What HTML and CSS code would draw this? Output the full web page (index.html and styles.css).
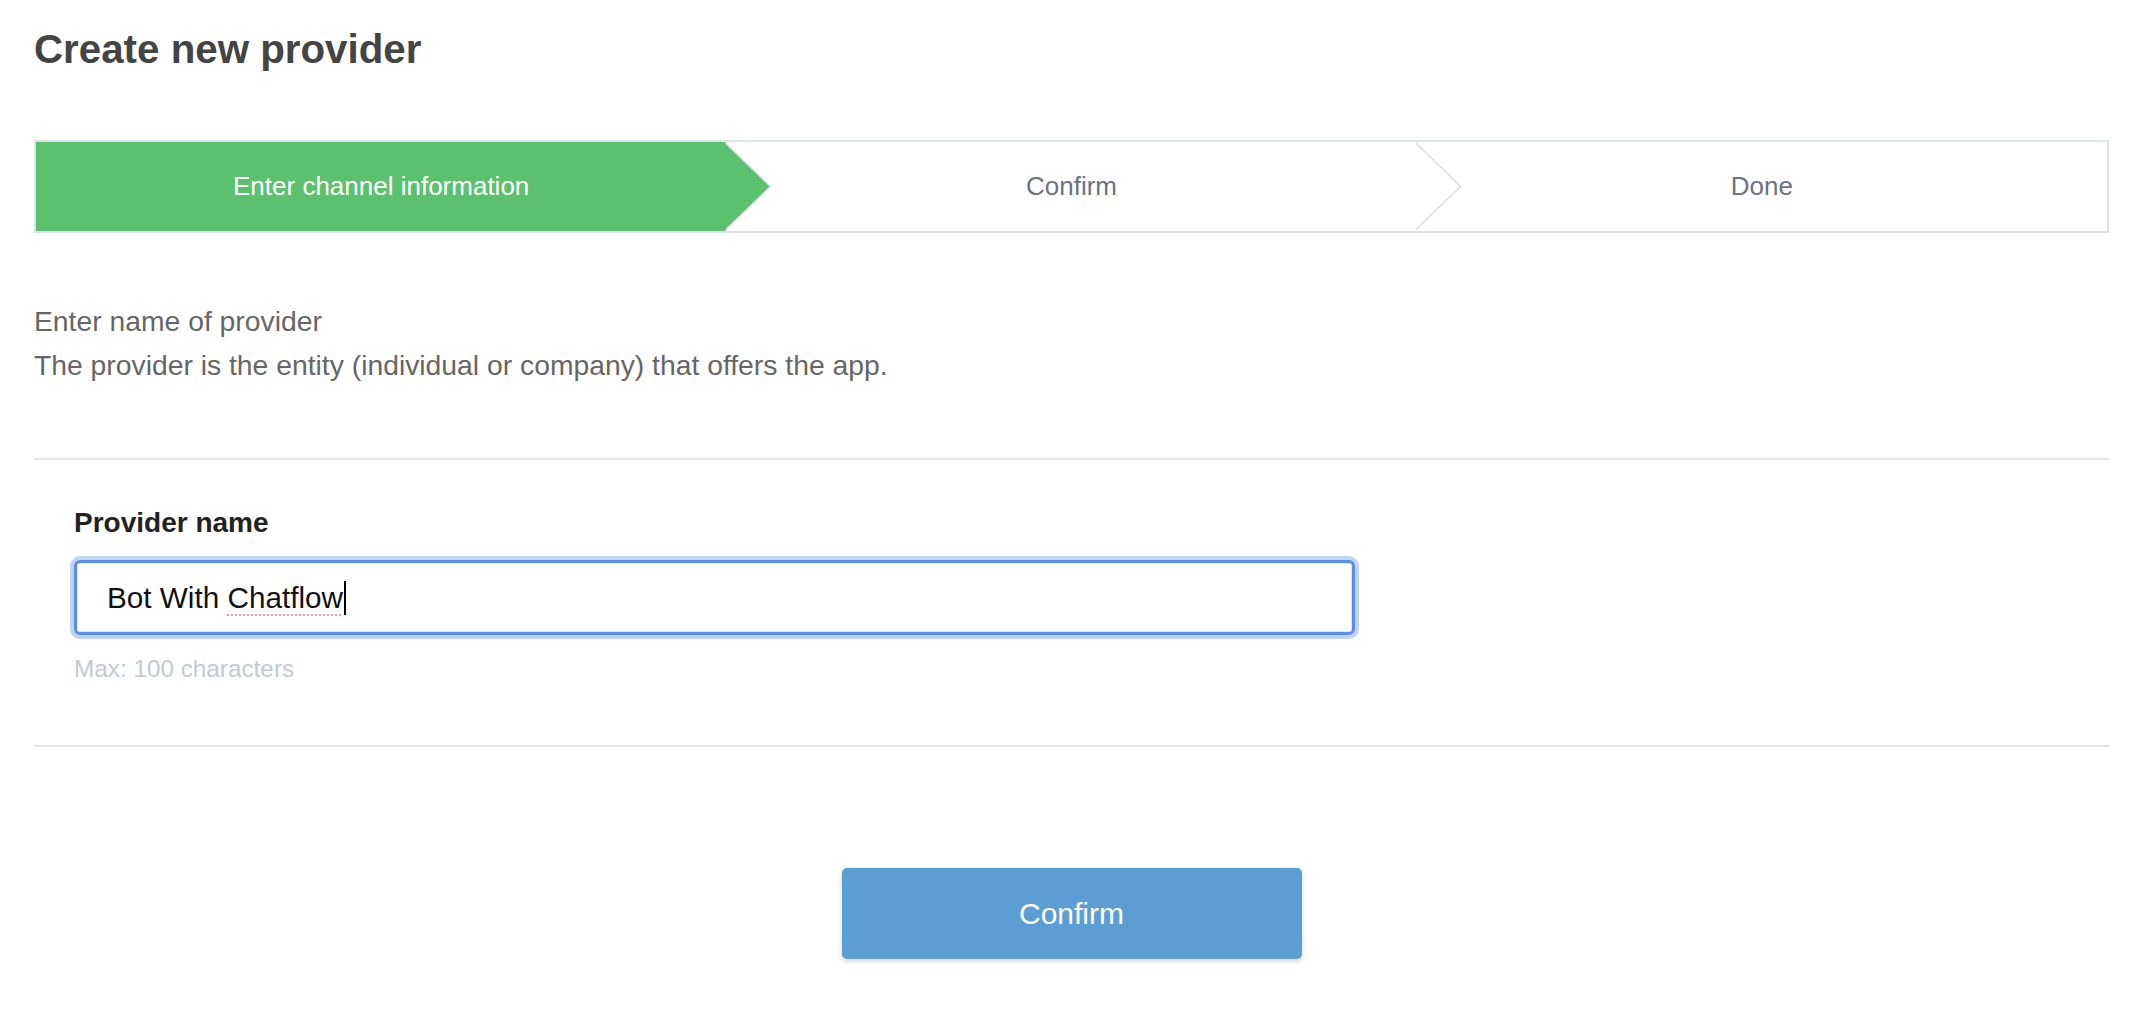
FILE: index.html
```html
<!DOCTYPE html>
<html lang="en">
<head>
<meta charset="utf-8">
<title>Create new provider</title>
<link rel="stylesheet" href="styles.css">
</head>
<body>
<main class="page">
  <h1 class="title">Create new provider</h1>

  <ol class="steps">
    <li class="step step-current">Enter channel information</li>
    <li class="step step-next">Confirm</li>
    <li class="step step-last">Done</li>
  </ol>

  <div class="intro">
    <p class="intro-line">Enter name of provider</p>
    <p class="intro-line">The provider is the entity (individual or company) that offers the app.</p>
  </div>

  <section class="form-section">
    <label class="field-label" for="provider-name">Provider name</label>
    <div class="field-input" id="provider-name" role="textbox" aria-label="Provider name">
      <span class="field-value">Bot With <span class="misspelled">Chatflow</span></span><span class="caret"></span>
    </div>
    <p class="field-hint">Max: 100 characters</p>
  </section>

  <div class="actions">
    <button class="btn-confirm" type="button">Confirm</button>
  </div>
</main>
</body>
</html>
```

FILE: styles.css
```css
* {
  box-sizing: border-box;
}

html, body {
  margin: 0;
  padding: 0;
  background: #ffffff;
}

body {
  font-family: "Liberation Sans", Arial, Helvetica, sans-serif;
  color: #444444;
}

.page {
  padding: 26px 41px 40px 34px;
}

.title {
  margin: 0;
  font-size: 40.3px;
  line-height: 48px;
  font-weight: 700;
  color: #444444;
}

/* Steps bar */
.steps {
  list-style: none;
  margin: 66px 0 0 0;
  padding: 0;
  display: flex;
  border: 2px solid #dfe4eb;
  height: 93px;
}

.step {
  position: relative;
  flex: 1 1 0;
  display: flex;
  align-items: center;
  justify-content: center;
  font-size: 26px;
  color: #6b7480;
}

.step-current {
  background: #5cc16f;
  color: #ffffff;
}

.step-current::before,
.step-current::after,
.step-next::before,
.step-next::after {
  content: "";
  position: absolute;
  top: 0;
  height: 100%;
  width: 46px;
  clip-path: polygon(0 0, 100% 50%, 0 100%);
}

.step-current::before,
.step-next::before {
  left: calc(100% - 1px);
  background: #d6dee6;
  z-index: 1;
}

.step-current::after {
  left: calc(100% - 3px);
  background: #5cc16f;
  z-index: 2;
}

.step-next::after {
  left: calc(100% - 3px);
  background: #ffffff;
  z-index: 2;
}

/* Intro text */
.intro {
  margin-top: 66px;
}

.intro-line {
  margin: 0;
  font-size: 28.3px;
  line-height: 44px;
  color: #666666;
}

/* Form section */
.form-section {
  margin-top: 71px;
  border-top: 2px solid #e2e7ed;
  border-bottom: 2px solid #e2e7ed;
  padding: 43px 0 59px 40px;
}

.field-label {
  display: block;
  font-size: 28px;
  line-height: 40px;
  font-weight: 700;
  color: #222222;
}

.field-input {
  margin-top: 17px;
  width: 1281px;
  height: 75px;
  border: 3px solid #5b8fe7;
  border-radius: 6px;
  box-shadow: 0 0 0 4px #bfd4f7, inset 0 0 0 1px #e4e8ee;
  padding-left: 30px;
  display: flex;
  align-items: center;
  font-size: 29.7px;
  color: #111111;
  background: #ffffff;
}

.field-value {
  white-space: pre;
}

.misspelled {
  text-decoration: underline dotted #ef9a9a;
  text-decoration-thickness: 2px;
  text-underline-offset: 7px;
}

.caret {
  display: inline-block;
  width: 2px;
  height: 34px;
  margin-left: 1px;
  background: #000000;
}

.field-hint {
  margin: 17px 0 0 0;
  font-size: 24.3px;
  line-height: 34px;
  color: #c2cad3;
}

/* Actions */
.actions {
  display: flex;
  justify-content: center;
  margin-top: 121px;
}

.btn-confirm {
  width: 460px;
  height: 91px;
  border: none;
  border-radius: 5px;
  background: #5c9ed3;
  color: #ffffff;
  font-family: "Liberation Sans", Arial, Helvetica, sans-serif;
  font-size: 30px;
  font-weight: 400;
  box-shadow: 0 2px 5px rgba(0, 0, 0, 0.18);
  cursor: pointer;
}
```
